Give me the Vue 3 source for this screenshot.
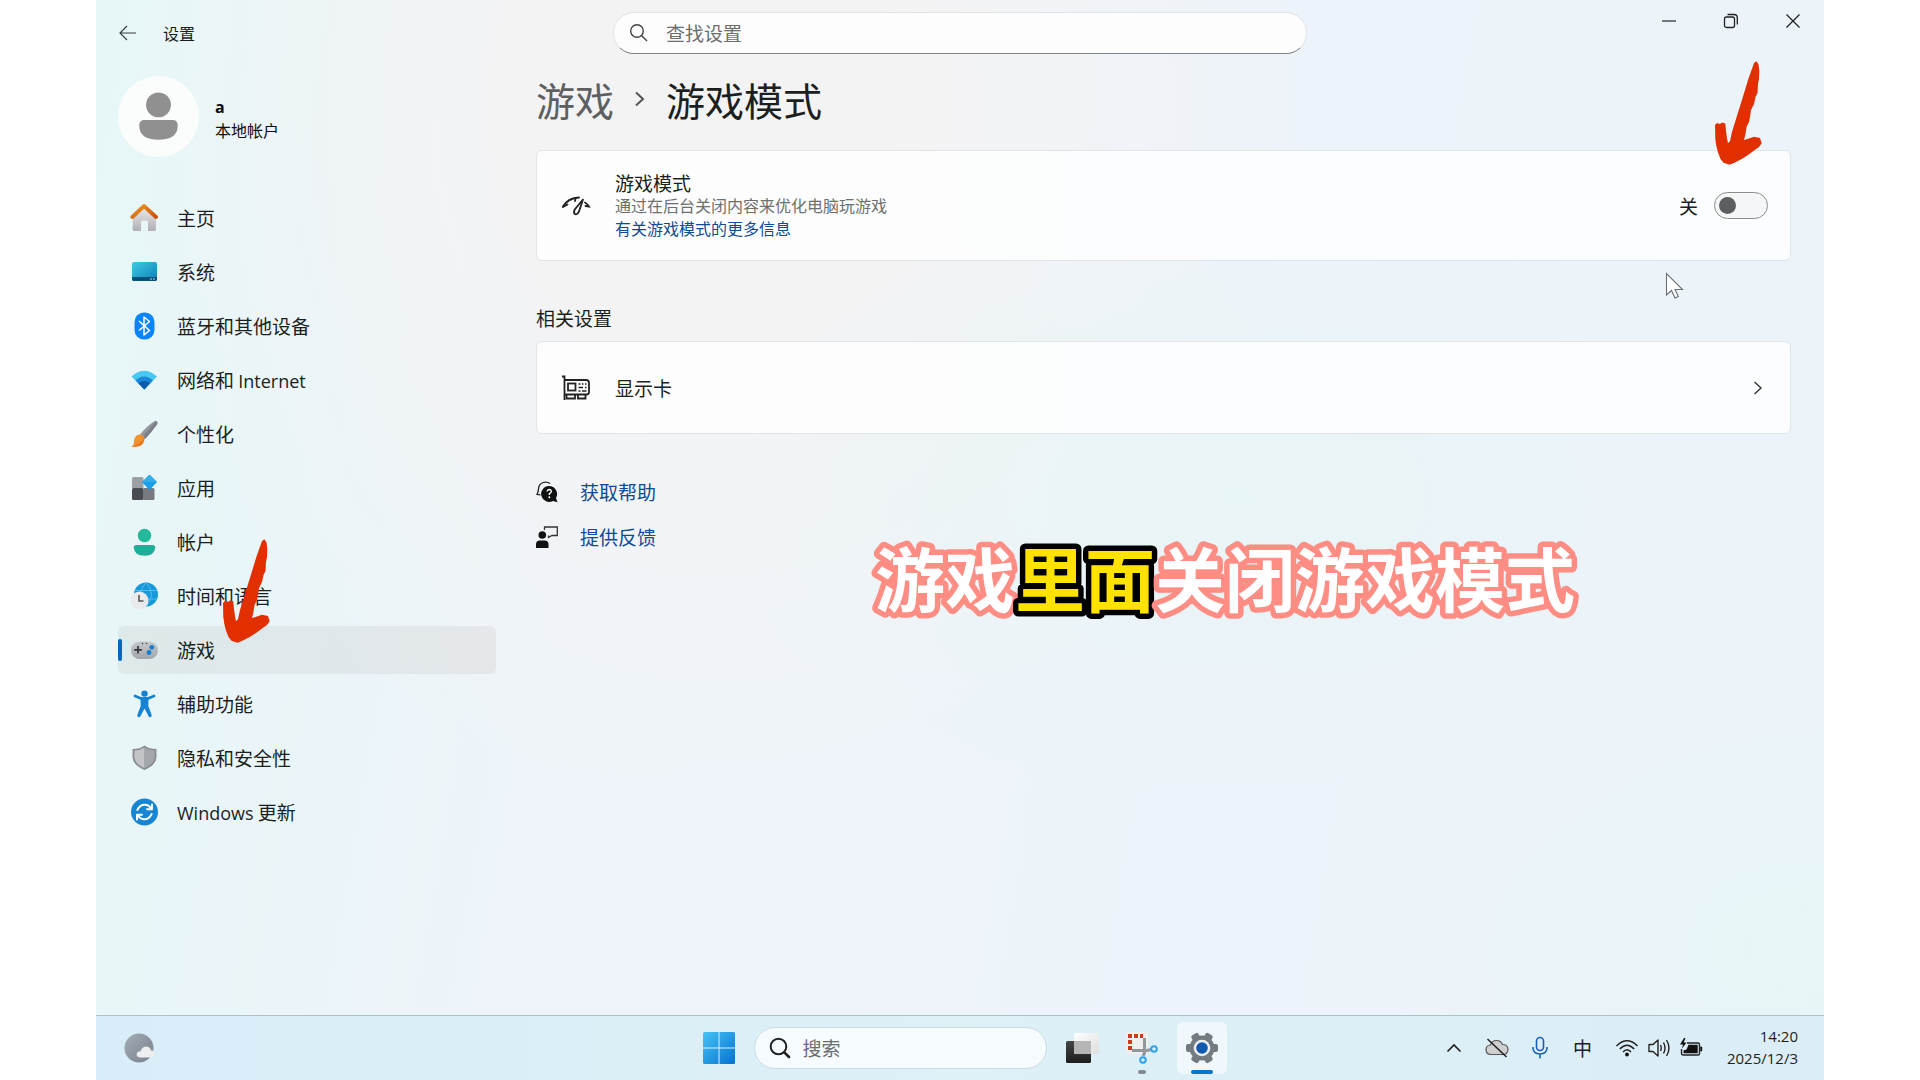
<script setup>
import { ref } from 'vue'

const gameMode = ref(false)

const navItems = [
  { id: 'home', label: '主页' },
  { id: 'system', label: '系统' },
  { id: 'bluetooth', label: '蓝牙和其他设备' },
  { id: 'network', label: '网络和', latin: 'Internet', latinLast: true },
  { id: 'brush', label: '个性化' },
  { id: 'apps', label: '应用' },
  { id: 'accounts', label: '帐户' },
  { id: 'time', label: '时间和语言' },
  { id: 'gaming', label: '游戏' },
  { id: 'access', label: '辅助功能' },
  { id: 'privacy', label: '隐私和安全性' },
  { id: 'update', label: '更新', latin: 'Windows' },
]
const active = 'gaming'

const arrowPath =
  'M40 2 L42.500 .3 L44.500 3.500 L45.300 10 L45 18 L44 23 L43.500 32 L41.500 36 L40 43 L37 49 L36 56 L35 61 L32.500 66 L31.500 73 L30 79 L35 77.500 L40 75.700 L46 77 L47.700 82.300 L45 86 L40 89.500 L34 94 L27.700 98 L21 101.500 L15.500 103.700 L9.500 101.700 L6.500 98 L4 91.500 L2.300 85 L1.300 78 L1 64 L3 62 L6 63 L8 61.500 L11.300 62.500 L12 70 L13 77 L14 82.300 L16 80 L18 71 L22.700 55.700 L27 42 L31 29 L34 19 Z'
</script>

<template>
  <div class="desktop">
    <header class="titlebar">
      <div class="title-left">
        <button class="plain back" type="button" aria-label="返回">
          <svg width="18" height="16" viewBox="0 0 18 16" fill="none" stroke="#3a4040" stroke-width="1.2">
            <path d="M8 1 L1 8 L8 15 M1 8 H17" />
          </svg>
        </button>
        <span class="app-name">设置</span>
      </div>
      <label class="find">
        <svg width="20" height="20" viewBox="0 0 20 20" fill="none" stroke="#444" stroke-width="1.4">
          <circle cx="8" cy="8" r="6.300" /><path d="M12.500 12.500 L18 18" />
        </svg>
        <input type="text" placeholder="查找设置" aria-label="查找设置" />
      </label>
      <div class="window-controls">
        <button class="plain" type="button" aria-label="最小化">
          <svg width="16" height="16" viewBox="0 0 16 16"><path d="M1 8 H15" stroke="#333" stroke-width="1.300" /></svg>
        </button>
        <button class="plain" type="button" aria-label="还原">
          <svg width="16" height="16" viewBox="0 0 16 16" fill="none" stroke="#222" stroke-width="1.300">
            <rect x="1.500" y="4" width="10" height="10.500" rx="2" />
            <path d="M4.500 1.500 H11 Q14.300 1.500 14.300 5 V11.500" />
          </svg>
        </button>
        <button class="plain" type="button" aria-label="关闭">
          <svg width="16" height="16" viewBox="0 0 16 16"><path d="M1.500 1.500 L14.500 14.500 M14.500 1.500 L1.500 14.500" stroke="#222" stroke-width="1.300" /></svg>
        </button>
      </div>
    </header>

    <div class="body">
      <aside class="sidebar">
        <div class="profile">
          <svg class="avatar" width="81" height="81" viewBox="0 0 80 80">
            <circle cx="40" cy="40" r="40" fill="#fbfcfc" />
            <circle cx="40" cy="28.500" r="12.300" fill="#909090" />
            <path d="M26 43.500 H54 Q59 43.500 59 49 Q59 63 40 63 Q21 63 21 49 Q21 43.500 26 43.500 Z" fill="#909090" />
          </svg>
          <div class="who">
            <strong>a</strong>
            <span>本地帐户</span>
          </div>
        </div>

        <nav class="nav" aria-label="设置">
          <a
            v-for="item in navItems"
            :key="item.id"
            href="#"
            class="nav-item"
            :class="{ active: item.id === active }"
            :aria-current="item.id === active ? 'page' : undefined"
          >
            <svg class="nav-icon" width="28" height="28" viewBox="0 0 28 28">
              <template v-if="item.id === 'home'">
                <defs>
                  <linearGradient id="hw" x1="0" y1="0" x2="0" y2="1"><stop offset="0" stop-color="#ececee" /><stop offset="1" stop-color="#b0b0b4" /></linearGradient>
                  <linearGradient id="hr" x1="0" y1="0" x2="1" y2="1"><stop offset="0" stop-color="#f09a1e" /><stop offset="1" stop-color="#c9500c" /></linearGradient>
                </defs>
                <path d="M3 12 L14 2.500 L26 12 V25 Q26 27 24 27 H18 V18 Q18 16.500 16.500 16.500 H12.500 Q11 16.500 11 18 V27 H4.500 Q2.500 27 2.500 25 Z" fill="url(#hw)" />
                <path d="M2.300 13 L14 2 L26 13" fill="none" stroke="url(#hr)" stroke-width="3.800" stroke-linecap="round" stroke-linejoin="round" />
              </template>
              <template v-else-if="item.id === 'system'">
                <defs><linearGradient id="sy" x1="0" y1="0" x2="1" y2="1"><stop offset="0" stop-color="#3dcbe2" /><stop offset="1" stop-color="#0d7fb8" /></linearGradient></defs>
                <rect x="2" y="4" width="25" height="19" rx="2" fill="url(#sy)" />
                <path d="M2 19 H27 V21 Q27 23 25 23 H4 Q2 23 2 21 Z" fill="#084f79" />
                <circle cx="21" cy="21" r=".8" fill="#c5edff" /><circle cx="24" cy="21" r=".8" fill="#c5edff" />
              </template>
              <template v-else-if="item.id === 'bluetooth'">
                <rect x="4.500" y=".5" width="20" height="27" rx="9.500" fill="#0a84ff" />
                <path d="M9 9 L19.500 18.500 L14 23 V5 L19.500 9.500 L9 18.500" fill="none" stroke="#fff" stroke-width="1.500" stroke-linejoin="round" />
              </template>
              <template v-else-if="item.id === 'network'">
                <path d="M1.500 10.500 Q14 -1 27 10.500 L14.300 23.500 Z" fill="#48c8f0" />
                <path d="M5.500 14.500 Q14 6.500 23 14.500 L14.300 23.500 Z" fill="#1b87d6" />
                <path d="M8.500 17.300 Q14 12.500 20 17.300 L14.300 23.500 Z" fill="#1059ad" />
              </template>
              <template v-else-if="item.id === 'brush'">
                <path d="M25 .8 Q28 1 27.300 4 Q21 13 15 19 L10 14.500 Q17 6 25 .8 Z" fill="#9297a0" />
                <path d="M26 1 Q28 2 27.300 4 Q21 13 15 19 L12.500 17 Z" fill="#7b808a" />
                <path d="M9.500 14.500 Q15 15 14.500 20 Q13 28 1.500 26.500 Q4.500 24.500 4 20.500 Q5 15 9.500 14.500 Z" fill="#f3932c" />
                <path d="M14 18 Q14 28 1.500 26.500 Q10 24 14 18 Z" fill="#e9761f" />
              </template>
              <template v-else-if="item.id === 'apps'">
                <rect x="2" y="3" width="11.500" height="11.500" rx="1.500" fill="#9ca0a4" />
                <rect x="2" y="14" width="11.500" height="12" rx="1.500" fill="#484c52" />
                <rect x="13" y="14" width="11.500" height="12" rx="1.500" fill="#777b80" />
                <path d="M19.500 1 L26.500 8 L19.500 15.500 L12.500 8 Z" fill="#1b9ee6" stroke="#1b9ee6" stroke-linejoin="round" />
                <path d="M19.500 1 L26.500 8 L12.500 8 Z" fill="#35aeec" />
              </template>
              <template v-else-if="item.id === 'accounts'">
                <circle cx="14.500" cy="7.500" r="6.800" fill="#24b99c" />
                <path d="M6.500 17 H22.500 Q25.300 17 25.300 19.500 Q24.500 27.800 14.500 27.800 Q4.500 27.800 3.700 19.500 Q3.700 17 6.500 17 Z" fill="#1fae98" />
              </template>
              <template v-else-if="item.id === 'time'">
                <circle cx="16" cy="12.500" r="12" fill="#1798d8" />
                <path d="M5 8.500 H27 M4.500 17 H27 M16 .5 Q5 12.500 16 24.500 M16 .5 Q27 12.500 16 24.500" fill="none" stroke="#55bdec" stroke-width="1" />
                <circle cx="9.500" cy="18.500" r="9" fill="#e9eaec" />
                <path d="M9 13 V19 H13.500" fill="none" stroke="#555" stroke-width="1.600" />
              </template>
              <template v-else-if="item.id === 'gaming'">
                <defs><linearGradient id="gm" x1="0" y1="0" x2="0" y2="1"><stop offset="0" stop-color="#c6c9cc" /><stop offset="1" stop-color="#a2a6aa" /></linearGradient></defs>
                <rect x="1" y="5.500" width="27" height="17.500" rx="8.700" fill="url(#gm)" />
                <path d="M8 10 V17.500 M4.300 13.800 H11.800" stroke="#33373b" stroke-width="1.700" />
                <circle cx="12.500" cy="7.500" r=".8" fill="#4a4e52" /><circle cx="16.500" cy="7.500" r=".8" fill="#4a4e52" />
                <circle cx="21.800" cy="11.300" r="2.400" fill="#147dd6" /><circle cx="19" cy="16.500" r="2.400" fill="#147dd6" />
              </template>
              <template v-else-if="item.id === 'access'">
                <circle cx="14.500" cy="3.600" r="3.200" fill="#1582d2" />
                <path d="M5 6 L11 8.500 H18 L24 6" fill="none" stroke="#1582d2" stroke-width="2.800" stroke-linecap="round" stroke-linejoin="round" />
                <path d="M10.500 8 H18.500 L18.300 16 L21.700 25 Q21.700 27.800 19 27 L14.500 18.500 L10 27 Q7.200 27.800 7.300 25 L10.700 16 Z" fill="#1582d2" />
              </template>
              <template v-else-if="item.id === 'privacy'">
                <path d="M14.500 1.500 Q19 5 26.500 5 V13 Q26 21.500 14.500 26 Q3 21.500 2.500 13 V5 Q10 5 14.500 1.500 Z" fill="#8a8e92" />
                <path d="M14.500 3.500 Q10 6.500 4.300 6.500 V13 Q5 20 14.500 24.200 Z" fill="#c2c4c7" />
                <path d="M14.500 3.500 Q19 6.500 24.700 6.500 V13 Q24 20 14.500 24.200 Z" fill="#a3a6aa" />
              </template>
              <template v-else>
                <circle cx="14.500" cy="14" r="13.500" fill="#1686d4" />
                <g fill="none" stroke="#fff" stroke-width="1.900" stroke-linecap="round" stroke-linejoin="round">
                  <path d="M7.300 12 Q10 6.500 15 6.800 Q19 7 21.500 11" /><path d="M22 6.500 V11.300 H17" />
                  <path d="M21.700 16 Q19 21.500 14 21.200 Q10 21 7.500 17" /><path d="M7 21.500 V16.700 H12" />
                </g>
              </template>
            </svg>
            <span v-if="item.latinLast">{{ item.label }} <span class="latin">{{ item.latin }}</span></span>
            <span v-else-if="item.latin"><span class="latin">{{ item.latin }}</span> {{ item.label }}</span>
            <span v-else>{{ item.label }}</span>
            <svg v-if="item.id === active" class="mark mark-nav" width="48" height="104" viewBox="0 0 48 104" aria-hidden="true">
              <path :d="arrowPath" fill="#e22f00" />
            </svg>
          </a>
        </nav>
      </aside>

      <main class="main">
        <h1 class="crumbs">
          <a href="#">游戏</a>
          <svg width="12" height="18" viewBox="0 0 12 18" fill="none" stroke="#555" stroke-width="2"><path d="M2 2.500 L9 9 L2 15.500" /></svg>
          <span>游戏模式</span>
        </h1>

        <section class="card card-mode">
          <svg class="card-icon" width="30" height="24" viewBox="0 0 30 24" fill="none" stroke="#222" stroke-width="1.800" stroke-linecap="round">
            <path d="M2 12.500 Q7 4 18 3.500" />
            <path d="M2 13 L6.500 10.500" /><path d="M14.500 4 L14 7" />
            <path d="M24 8.500 Q26.500 10 28 12.500 L24.500 12" />
            <path d="M22 5.500 L14.500 14.500 Q12 17.500 13.500 19.700 Q16 21.500 18 17.500 Z" stroke-linejoin="round" />
          </svg>
          <div class="card-text">
            <label for="game-mode" class="card-title">游戏模式</label>
            <p>通过在后台关闭内容来优化电脑玩游戏</p>
            <a href="#">有关游戏模式的更多信息</a>
          </div>
          <div class="switch-wrap">
            <span>{{ gameMode ? '开' : '关' }}</span>
            <input id="game-mode" v-model="gameMode" class="switch" type="checkbox" role="switch" />
            <svg class="mark mark-switch" width="48" height="104" viewBox="0 0 48 104" aria-hidden="true">
              <path :d="arrowPath" fill="#e22f00" />
            </svg>
            <svg class="cursor" width="20" height="28" viewBox="0 0 20 28" aria-hidden="true">
              <path d="M1.500 1.500 V23 L6.500 18.500 L10 26 L13.300 24.500 L10 17.500 H17.500 Z" fill="#fff" stroke="#6b7176" stroke-width="1.100" />
            </svg>
          </div>
        </section>

        <h2 class="section-title">相关设置</h2>
        <a href="#" class="card card-gpu">
          <svg class="card-icon" width="30" height="26" viewBox="0 0 30 26" fill="none" stroke="#222" stroke-width="1.800">
            <path d="M1 1.500 H3.500 V25" />
            <path d="M3.500 5 H25 Q28 5 28 8 V17 Q28 19.500 25.500 19.500 H3.500" />
            <rect x="7" y="8.500" width="7.500" height="7" />
            <path d="M5.500 20 V23.500 H14 V20 M17 20 V23.500 H24.500 V20" />
            <path d="M17.500 9 H19.500 M21 9 H22.500 M24 9 H25.500 M17.500 12.500 H22 M24 12.500 H25.500 M17.500 16 H19.500 M21 16 H25.500" stroke-width="1.400" />
          </svg>
          <span class="card-title">显示卡</span>
          <svg class="chevron" width="10" height="16" viewBox="0 0 10 16" fill="none" stroke="#333" stroke-width="1.400"><path d="M1.500 2 L8 8 L1.500 14" /></svg>
        </a>

        <div class="help">
          <a href="#">
            <svg width="22" height="22" viewBox="0 0 22 22">
              <path d="M14 2.500 Q11 .3 7 1.500 Q2.500 3.500 2.500 8 Q2.500 10.500 1 13.500 L4.500 13.800" fill="none" stroke="#222" stroke-width="1.300" />
              <path d="M13 5 A8 8 0 1 0 17 20 L21.500 21.300 L20 17 A8 8 0 0 0 13 5 Z" fill="#111" />
              <path d="M11 10.500 Q11.300 8.500 13.300 8.500 Q15.500 8.700 15.300 10.600 Q15 12 13.300 12.700 V14" fill="none" stroke="#fff" stroke-width="1.400" />
              <circle cx="13.300" cy="16.300" r="1" fill="#fff" />
            </svg>
            <span>获取帮助</span>
          </a>
          <a href="#">
            <svg width="22" height="22" viewBox="0 0 22 22">
              <circle cx="6.300" cy="9" r="3.800" fill="#111" />
              <path d="M0 22 V18.500 Q0 14.500 4 14.500 H8.500 Q12.500 14.500 12.500 18.500 V22 Z" fill="#111" />
              <path d="M8.500 4 V1 H21.300 V9.500 H16 L12.500 11.500 V9.500" fill="none" stroke="#333" stroke-width="1.300" />
            </svg>
            <span>提供反馈</span>
          </a>
        </div>

        <svg class="caption" width="712" height="90" viewBox="0 0 712 90">
          <text x="6" y="70">游戏<tspan class="accent">里面</tspan>关闭游戏模式</text>
        </svg>
      </main>
    </div>

    <footer class="taskbar">
      <button class="plain weather" type="button" aria-label="天气">
        <svg width="32" height="30" viewBox="0 0 32 30">
          <defs><linearGradient id="mn" x1="0" y1="0" x2="1" y2="1"><stop offset="0" stop-color="#a4adb6" /><stop offset="1" stop-color="#79828c" /></linearGradient></defs>
          <circle cx="15" cy="15" r="14.500" fill="url(#mn)" />
          <path d="M16.500 24.500 Q12.500 24.300 12.700 21 Q13.300 18 16.500 18.200 Q18 13.500 22.500 13.500 Q26.500 14 27 17.500 Q31 17.800 31 21.300 Q30.500 24.500 27 24.500 Z" fill="#eceef0" />
        </svg>
      </button>

      <div class="task-center">
        <button class="task-button" type="button" aria-label="开始">
          <svg width="32" height="32" viewBox="0 0 32 32">
            <defs><linearGradient id="wn" x1="0" y1="0" x2="1" y2="1"><stop offset="0" stop-color="#45c3f5" /><stop offset="1" stop-color="#0671d0" /></linearGradient></defs>
            <path d="M1.500 0 H15.500 V15.500 H0 V1.500 Q0 0 1.500 0 Z M16.500 0 H30.500 Q32 0 32 1.500 V15.500 H16.500 Z M0 16.500 H15.500 V32 H1.500 Q0 32 0 30.500 Z M16.500 16.500 H32 V30.500 Q32 32 30.500 32 H16.500 Z" fill="url(#wn)" />
          </svg>
        </button>
        <label class="task-search">
          <svg width="22" height="22" viewBox="0 0 22 22" fill="none" stroke="#222">
            <circle cx="9.500" cy="9.500" r="7.800" stroke-width="2" /><path d="M15.300 15.300 L20 20" stroke-width="2.600" stroke-linecap="round" />
          </svg>
          <input type="text" placeholder="搜索" aria-label="搜索" />
        </label>
        <button class="task-button" type="button" aria-label="任务视图">
          <svg width="34" height="32" viewBox="0 0 34 32">
            <defs>
              <linearGradient id="t1" x1="0" y1="0" x2="0" y2="1"><stop offset="0" stop-color="#454545" /><stop offset="1" stop-color="#1e1e1e" /></linearGradient>
              <linearGradient id="t2" x1="0" y1="0" x2="1" y2="1"><stop offset="0" stop-color="#fff" /><stop offset="1" stop-color="#dedede" /></linearGradient>
            </defs>
            <rect x="1" y="9" width="25" height="22" rx="1.500" fill="url(#t1)" />
            <rect x="9" y="1" width="25" height="21" rx="1.500" fill="url(#t2)" />
            <path d="M9 9 H26 V22 H10.500 Q9 22 9 20.500 Z" fill="#b5b5b5" />
          </svg>
        </button>
        <button class="task-button running" type="button" aria-label="截图工具">
          <svg width="32" height="32" viewBox="0 0 32 32">
            <rect x="0" y="0" width="22" height="22" rx="3" fill="#f1efee" />
            <path d="M2 4 H17 M4 8 V18" fill="none" stroke="#c43e1c" stroke-width="4" stroke-dasharray="4 2" />
            <path d="M18.500 6 V21 L17 24 M6 18.500 H21 L25 17.500" fill="none" stroke="#92979b" stroke-width="3" />
            <circle cx="28" cy="17" r="2.800" fill="none" stroke="#2ea3ec" stroke-width="2" />
            <circle cx="17" cy="28" r="2.800" fill="none" stroke="#2ea3ec" stroke-width="2" />
          </svg>
        </button>
        <button class="task-button current" type="button" aria-label="设置">
          <svg width="32" height="32" viewBox="0 0 32 32">
            <g fill="#737a81">
              <circle cx="16" cy="16" r="12.500" />
              <rect v-for="n in 6" :key="n" x="12" y="0" width="8" height="8" rx="2" :transform="`rotate(${n * 60 - 30} 16 16)`" />
            </g>
            <circle cx="16" cy="16" r="8.300" fill="#e9eef3" />
            <circle cx="16" cy="16" r="5.800" fill="#1058b0" />
          </svg>
        </button>
      </div>

      <div class="tray">
        <button class="plain tray-button" type="button" aria-label="显示隐藏的图标">
          <svg width="16" height="10" viewBox="0 0 16 10" fill="none" stroke="#222" stroke-width="1.700"><path d="M1.500 8.500 L8 2 L14.500 8.500" /></svg>
        </button>
        <button class="plain tray-button" type="button" aria-label="OneDrive">
          <svg width="24" height="22" viewBox="0 0 24 22">
            <path d="M6 17.500 Q1 17.500 1 12.500 Q1.300 8.300 5.500 8 Q7 3.500 11.500 3.500 Q16 3.500 17.500 7.500 Q23 7.500 23 12.500 Q22.500 17.500 18 17.500 Z" fill="#cfcfd0" stroke="#555" stroke-width="1.200" />
            <path d="M2.500 2 L21.500 20" stroke="#222" stroke-width="1.600" />
          </svg>
        </button>
        <button class="plain tray-button" type="button" aria-label="麦克风">
          <svg width="18" height="24" viewBox="0 0 18 24" fill="none" stroke="#1b5fb4" stroke-width="1.600">
            <rect x="5.500" y="1.500" width="7" height="13" rx="3.500" />
            <path d="M1.800 11 Q2 18 9 18 Q16 18 16.200 11 M9 18 V22.500" />
          </svg>
        </button>
        <button class="plain tray-button ime" type="button">中</button>
        <button class="plain status" type="button" aria-label="网络 音量 电池">
          <svg width="24" height="20" viewBox="0 0 24 20" fill="none" stroke="#222" stroke-width="1.500">
            <path d="M1.500 8 Q12 -2.500 22.500 8 M4.800 11 Q12 3.500 19.200 11 M8 14 Q12 9.500 16 14" /><circle cx="12" cy="16.500" r="1.900" fill="#111" stroke="none" />
          </svg>
          <svg width="24" height="20" viewBox="0 0 24 20" fill="none" stroke="#222" stroke-width="1.400">
            <path d="M2 6.500 H6 L11 2 V18 L6 13.500 H2 Z" stroke-linejoin="round" />
            <path d="M13.500 7 Q15 10 13.500 13 M16.500 4.500 Q19.500 10 16.500 15.500 M19.500 2 Q24.500 10 19.500 18" />
          </svg>
          <svg width="24" height="20" viewBox="0 0 24 20">
            <path d="M8 5 H19 Q20.500 5 20.500 6.500 V15.500 Q20.500 17 19 17 H4.500 Q2.500 17 2.500 15 V11" fill="none" stroke="#222" stroke-width="1.400" />
            <path d="M9.500 6.800 H18.700 V15.200 H4.500 V12.500 L7.500 11.500 Z" fill="#111" />
            <rect x="21.300" y="8.500" width="1.900" height="5" rx=".9" fill="#111" />
            <path d="M5 0 L1 6.500 H4 L3 10.500 L7.500 4.500 H4.700 L6.500 0 Z" fill="#111" />
          </svg>
        </button>
        <button class="plain clock" type="button">
          <span>14:20</span>
          <span>2025/12/3</span>
        </button>
      </div>
    </footer>
  </div>
</template>

<style>
body {
  margin: 0;
  background: #fff;
}
</style>

<style scoped>
.desktop {
  display: flex;
  flex-direction: column;
  min-height: 100vh;
  margin: 0 5%;
  color: #1c1f20;
  font-family: "Noto Sans CJK SC", "Open Sans", sans-serif;
  font-size: 19px;
  line-height: 28px;
  background:
    radial-gradient(ellipse 30% 28% at 66% 46%, rgba(231, 245, 245, 0.8), transparent),
    radial-gradient(ellipse 26% 24% at 100% 88%, rgba(230, 246, 246, 0.8), transparent),
    radial-gradient(ellipse 34% 66% at 36% 10%, #f4f3f4 30%, transparent),
    linear-gradient(100deg, #e7f7f7 0%, #e9f5f8 14%, #eef4f9 30%, #edf3fa 65%, #ebf3f9 100%);
}

.desktop *,
.desktop *::before {
  box-sizing: border-box;
}

a {
  color: inherit;
  text-decoration: none;
}

.plain {
  display: flex;
  align-items: center;
  justify-content: center;
  padding: 0;
  border: 0;
  background: none;
  color: inherit;
  font: inherit;
}

input[type="text"] {
  flex: 1;
  min-width: 0;
  padding: 0;
  border: 0;
  outline: 0;
  background: none;
  color: inherit;
  font: inherit;
}

input::placeholder {
  color: #6b6e6f;
  opacity: 1;
}

.latin {
  font-family: "Open Sans", sans-serif;
  font-size: 18px;
}

/* title bar */
.titlebar {
  display: grid;
  grid-template-columns: 1fr minmax(0, 694px) 1fr;
  height: 54px;
}

.title-left {
  display: flex;
  align-items: center;
  gap: 25px;
  padding: 11px 0 0 22px;
  font-size: 16px;
}

.back {
  width: 20px;
  height: 28px;
}

.find {
  display: flex;
  align-items: center;
  gap: 17px;
  height: 42px;
  margin-top: 12px;
  padding: 0 15px;
  border: 1px solid #e0e4e5;
  border-bottom-color: #7f8384;
  border-radius: 21px;
  background: #fdfdfd;
}

.window-controls {
  display: flex;
  justify-content: flex-end;
}

.window-controls button {
  width: 62px;
  height: 42px;
}

/* columns */
.body {
  display: flex;
  flex: 1;
  gap: 40px;
  padding: 0 33px 24px 22px;
}

.sidebar {
  width: 378px;
  padding-top: 22px;
}

.profile {
  display: flex;
  align-items: center;
  gap: 16px;
  margin-bottom: 37px;
}

.who {
  display: flex;
  flex-direction: column;
  padding-top: 5px;
  font-size: 16px;
  line-height: 23px;
  color: #0c0e0f;
}

.who strong {
  font-family: "Open Sans", sans-serif;
  font-weight: 700;
}

.nav {
  display: flex;
  flex-direction: column;
  gap: 6px;
}

.nav-item {
  position: relative;
  display: flex;
  align-items: center;
  gap: 19px;
  height: 48px;
  padding-left: 12px;
  border-radius: 6px;
}

.nav-item.active {
  background: rgba(120, 90, 80, 0.08);
}

.nav-item.active::before {
  content: "";
  position: absolute;
  left: 0;
  top: 13px;
  width: 4px;
  height: 22px;
  border-radius: 2px;
  background: #0067c0;
}

.mark {
  position: absolute;
  z-index: 2;
  pointer-events: none;
}

.mark-nav {
  left: 104px;
  bottom: 31px;
}

/* content */
.main {
  position: relative;
  flex: 1;
  min-width: 0;
  padding-top: 22px;
}

.crumbs {
  display: flex;
  align-items: center;
  gap: 20px;
  margin: 0 0 28px;
  font-size: 39px;
  font-weight: 400;
  line-height: 46px;
}

.crumbs a {
  color: #5c6061;
}

.card {
  display: flex;
  align-items: center;
  padding: 0 22px 0 24px;
  border: 1px solid #e0e5e8;
  border-radius: 6px;
  background: linear-gradient(90deg, #fdfdfd, #fbfdff);
}

.card-icon {
  margin-right: 24px;
}

.card-mode {
  min-height: 111px;
}

.card-text {
  display: flex;
  flex-direction: column;
  align-items: flex-start;
  flex: 1;
  font-size: 16px;
  line-height: 23px;
}

.card-title {
  font-size: 19px;
}

.card-text p {
  margin: 0;
  color: #6c7071;
}

.card-text a {
  color: #0f4a94;
}

.switch-wrap {
  position: relative;
  display: flex;
  align-items: center;
  gap: 16px;
}

.switch {
  position: relative;
  width: 54px;
  height: 27px;
  margin: 0;
  border: 1px solid #8b8d8e;
  border-radius: 14px;
  background: #f5f6f7;
  appearance: none;
}

.switch::before {
  content: "";
  position: absolute;
  left: 4px;
  top: 4px;
  width: 17px;
  height: 17px;
  border-radius: 50%;
  background: #5d5e5f;
}

.switch:checked::before {
  left: 31px;
}

.mark-switch {
  right: 6px;
  bottom: 55px;
}

.cursor {
  position: absolute;
  right: 83px;
  top: 80px;
}

.section-title {
  margin: 43px 0 9px;
  font-size: 19px;
  font-weight: 400;
  line-height: 28px;
}

.card-gpu {
  min-height: 93px;
  padding-right: 27px;
}

.chevron {
  margin-left: auto;
}

.help {
  display: flex;
  flex-direction: column;
  align-items: flex-start;
  gap: 17px;
  margin-top: 44px;
  color: #0f4a94;
}

.help a {
  display: flex;
  align-items: center;
  gap: 22px;
}

.caption {
  position: absolute;
  left: 27%;
  top: 483px;
  margin-left: -6px;
  overflow: visible;
}

.caption text {
  fill: #fff;
  stroke: #ff8d83;
  stroke-width: 11px;
  stroke-linejoin: round;
  paint-order: stroke fill;
  font-size: 70px;
  font-weight: 700;
}

.caption .accent {
  fill: #ffe200;
  stroke: #000;
}

/* taskbar */
.taskbar {
  display: grid;
  grid-template-columns: 1fr auto 1fr;
  align-items: center;
  height: 65px;
  border-top: 1px solid #aebfc8;
  background: linear-gradient(90deg, #d9edf9, #ddf0f6 50%, #dbedf7);
}

.weather {
  width: 32px;
  margin-left: 28px;
}

.task-center {
  display: flex;
  align-items: center;
  gap: 10px;
}

.task-button {
  position: relative;
  display: flex;
  align-items: center;
  justify-content: center;
  width: 50px;
  height: 52px;
  padding: 0;
  border: 0;
  border-radius: 6px;
  background: none;
}

.task-button.current {
  background: #f0f8fd;
}

.running::before,
.current::before {
  content: "";
  position: absolute;
  left: 21px;
  bottom: 0;
  width: 8px;
  height: 4px;
  border-radius: 2px;
  background: #828a90;
}

.current::before {
  left: 14px;
  width: 22px;
  background: #0a74cc;
}

.task-search {
  display: flex;
  align-items: center;
  gap: 12px;
  width: 293px;
  height: 42px;
  padding: 0 14px;
  border: 1px solid #c9dbe4;
  border-radius: 21px;
  background: #f5fbfe;
}

.tray {
  display: flex;
  align-items: center;
  justify-content: flex-end;
  padding-right: 26px;
}

.tray-button {
  width: 43px;
  height: 48px;
}

.status {
  gap: 8px;
  height: 48px;
  margin-left: 11px;
}

.clock {
  flex-direction: column;
  align-items: flex-end;
  min-width: 95px;
  padding-bottom: 2px;
  font-family: "Open Sans", sans-serif;
  font-size: 15px;
  line-height: 22px;
}
</style>
